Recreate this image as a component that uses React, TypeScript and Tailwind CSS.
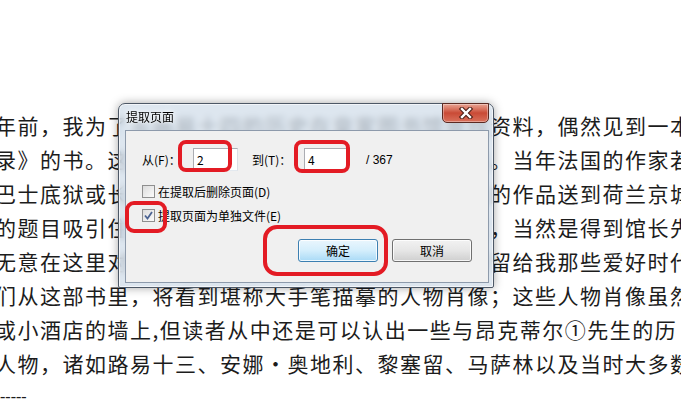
import React from 'react';

const lines = [
  '年前，我为了写路易十四的历史在皇家图书馆查找资料，偶然见到一本',
  '录》的书。这本书和那个时代的作品一样，出版的。当年法国的作家若',
  '巴士底狱或长期被流放到外省去，一般都只把自己的作品送到荷兰京城',
  '的题目吸引住了我，于是我把这本书借回了自己家，当然是得到馆长先',
  '无意在这里对这部奇书进行分析，我只想把这部书留给我那些爱好时代',
  '们从这部书里，将看到堪称大手笔描摹的人物肖像；这些人物肖像虽然',
  '或小酒店的墙上,但读者从中还是可以认出一些与昂克蒂尔①先生的历',
  '人物，诸如路易十三、安娜・奥地利、黎塞留、马萨林以及当时大多数',
];

function Checkbox({ checked }: { checked?: boolean }) {
  return (
    <span className="relative flex h-[13px] w-[13px] shrink-0 items-center justify-center border border-[#8f8f8f] bg-gradient-to-br from-[#dcdcdc] to-[#fbfbfb]">
      {checked && (
        <svg width="11" height="11" viewBox="0 0 11 11" className="absolute">
          <path d="M2 5.5 L4.5 8.5 L9 2" fill="none" stroke="#4b6392" strokeWidth="1.8" />
        </svg>
      )}
    </span>
  );
}

function CloseButton() {
  return (
    <div className="absolute right-[4px] top-[-1px] flex h-[20px] w-[47px] items-center justify-center rounded-b-[5px] border border-[#5b2a22] bg-gradient-to-b from-[#e8a493] via-[#c94a36] to-[#d9705b] shadow-[inset_0_0_0_1px_rgba(255,255,255,0.35)]">
      <svg width="16" height="12" viewBox="0 0 16 12">
        <path d="M4 2 L12 10 M12 2 L4 10" stroke="#4a1e16" strokeWidth="4.5" strokeLinecap="square" />
        <path d="M4 2 L12 10 M12 2 L4 10" stroke="#ffffff" strokeWidth="2.4" strokeLinecap="square" />
      </svg>
    </div>
  );
}

function TextBox({ value }: { value: string }) {
  return (
    <div className="flex h-[23px] w-[45px] items-center border border-[#abadb3] border-b-[#e3e9ef] border-r-[#dbdfe6] bg-white pl-[3px] text-[12px] text-black">
      {value}
    </div>
  );
}

function Dialog() {
  return (
    <div className="absolute left-[118px] top-[103px] flex h-[185px] w-[376px] flex-col rounded-t-[7px] rounded-b-[2px] border border-[#4d5866] bg-[#d2deea]/75 shadow-[0_0_10px_rgba(0,0,0,0.35),inset_0_0_0_1px_rgba(255,255,255,0.6)] backdrop-blur-[3px]">
      <div className="relative h-[26px] pl-[7px] pt-[5px] text-[12px] leading-[16px] text-black [text-shadow:0_0_6px_#fff,0_0_3px_#fff]">
        提取页面
        <CloseButton />
      </div>
      <div className="mb-[4px] ml-[6px] mr-[4px] flex flex-1 flex-col border border-[#8d9aab] bg-[#f0f0f0] text-[12px] text-black">
        <div className="flex items-center pl-[16px] pt-[17px]">
          <span className="w-[51px]">从(F)：</span>
          <TextBox value="2" />
          <span className="ml-[14px] w-[52px]">到(T)：</span>
          <TextBox value="4" />
          <span className="ml-[17px] font-['Liberation_Sans',sans-serif]">/ 367</span>
        </div>
        <div className="mt-[14px] flex items-center gap-[3px] pl-[16px] leading-[13px]">
          <Checkbox />
          <span>在提取后删除页面(D)</span>
        </div>
        <div className="mt-[11px] flex items-center gap-[3px] pl-[16px] leading-[13px]">
          <Checkbox checked />
          <span>提取页面为单独文件(E)</span>
        </div>
        <div className="mt-[17px] flex justify-end gap-[14px] pr-[16px]">
          <button className="h-[23px] w-[80px] rounded-[3px] border border-[#3c7fb1] bg-gradient-to-b from-[#eaf6fd] via-[#d4eefc] to-[#a9daf6] shadow-[inset_0_0_0_1px_rgba(255,255,255,0.8)]">
            确定
          </button>
          <button className="h-[23px] w-[80px] rounded-[3px] border border-[#707070] bg-gradient-to-b from-[#f2f2f2] via-[#e6e6e6] to-[#cfcfcf] shadow-[inset_0_0_0_1px_rgba(255,255,255,0.8)]">
            取消
          </button>
        </div>
      </div>
    </div>
  );
}

export default function App() {
  return (
    <div className="relative h-[412px] w-[681px] overflow-hidden bg-white font-['Noto_Sans_CJK_SC',sans-serif]">
      <div className="flex flex-col pt-[108px] text-[21px] leading-[34px] tracking-[1.5px] text-[#1c1c1c]">
        {lines.map((line) => (
          <div key={line} className="-ml-[5px] whitespace-nowrap">
            {line}
          </div>
        ))}
        <div className="font-['Liberation_Serif',serif] text-[16px] tracking-normal">-----</div>
      </div>

      <Dialog />

      {/* red annotation marks */}
      <div className="absolute left-[178px] top-[140px] h-[32px] w-[54px] rounded-[8px] border-[4px] border-[#e31b24]" />
      <div className="absolute left-[294px] top-[140px] h-[33px] w-[56px] rounded-[8px] border-[4px] border-[#e31b24]" />
      <div className="absolute left-[125px] top-[201px] h-[32px] w-[42px] rounded-[9px] border-[4px] border-[#e31b24]" />
      <div className="absolute left-[263px] top-[225px] h-[51px] w-[125px] rounded-[14px] border-[4px] border-[#e31b24]" />
    </div>
  );
}
